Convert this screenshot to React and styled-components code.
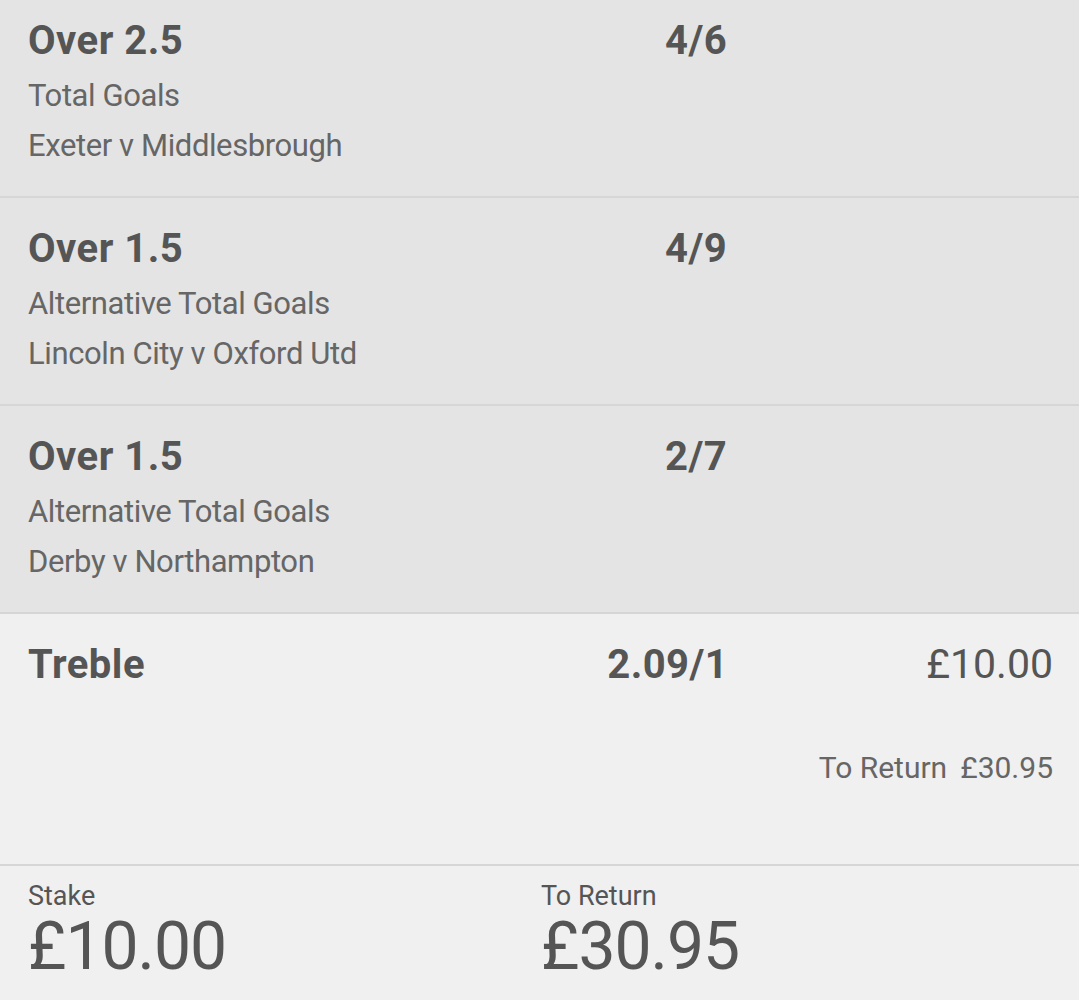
import React from "react";
import styled, { createGlobalStyle } from "styled-components";

const GlobalStyle = createGlobalStyle`
  html, body { margin: 0; padding: 0; background: #f0f0f0; }
  body { font-family: Roboto, "Noto Sans", "Liberation Sans", sans-serif; overflow: hidden; }
  * { box-sizing: border-box; }
`;

const Slip = styled.div`
  width: 1079px;
  margin-top: -10px;
  display: flex;
  flex-direction: column;
`;

const Selection = styled.div`
  display: grid;
  grid-template-columns: 1fr 160px 325px;
  padding: 29px 27px 25px 28px;
  background: #e4e4e4;
  border-bottom: 2px solid #d6d6d6;
  color: #555;
`;

const Info = styled.div`
  display: flex;
  flex-direction: column;
`;

const Title = styled.div`
  font-size: 40px;
  line-height: 44px;
  font-weight: 700;
  letter-spacing: 0.5px;
  color: #555;
`;

const Details = styled.div`
  margin-top: 8px;
  display: flex;
  flex-direction: column;
`;

const Detail = styled.div`
  font-size: 31px;
  line-height: 50px;
  letter-spacing: -0.4px;
  color: #666;
`;

const Odds = styled.div`
  font-size: 40px;
  line-height: 44px;
  font-weight: 700;
  letter-spacing: 0.4px;
  color: #555;
  text-align: right;
`;

const Multiple = styled.div`
  display: grid;
  grid-template-columns: 1fr 160px 325px;
  grid-template-rows: 44px auto;
  row-gap: 63px;
  padding: 29px 26px 78px 28px;
  background: #f0f0f0;
  border-bottom: 2px solid #d6d6d6;
`;

const StakeValue = styled.div`
  font-size: 41px;
  line-height: 44px;
  font-weight: 400;
  color: #555;
  text-align: right;
  transform: translateY(-1px);
`;

const ReturnLine = styled.div`
  grid-column: 1 / -1;
  display: flex;
  justify-content: flex-end;
  gap: 13px;
  font-size: 30px;
  line-height: 36px;
  color: #666;
`;

const Footer = styled.div`
  display: grid;
  grid-template-columns: 513px 1fr;
  padding: 15px 28px 18px 28px;
  background: #f0f0f0;
`;

const Total = styled.div`
  display: flex;
  flex-direction: column;
`;

const TotalLabel = styled.div`
  font-size: 27px;
  line-height: 30px;
  color: #555;
`;

const TotalValue = styled.div`
  font-size: 66px;
  line-height: 72px;
  letter-spacing: -1px;
  color: #555;
`;

const selections = [
  { title: "Over 2.5", market: "Total Goals", event: "Exeter v Middlesbrough", odds: "4/6" },
  { title: "Over 1.5", market: "Alternative Total Goals", event: "Lincoln City v Oxford Utd", odds: "4/9" },
  { title: "Over 1.5", market: "Alternative Total Goals", event: "Derby v Northampton", odds: "2/7" },
];

export default function App() {
  return (
    <>
      <GlobalStyle />
      <Slip>
        {selections.map((s, i) => (
          <Selection key={i}>
            <Info>
              <Title>{s.title}</Title>
              <Details>
                <Detail>{s.market}</Detail>
                <Detail>{s.event}</Detail>
              </Details>
            </Info>
            <Odds>{s.odds}</Odds>
            <div />
          </Selection>
        ))}
        <Multiple>
          <Title>Treble</Title>
          <Odds>2.09/1</Odds>
          <StakeValue>£10.00</StakeValue>
          <ReturnLine>
            <span>To Return</span>
            <span>£30.95</span>
          </ReturnLine>
        </Multiple>
        <Footer>
          <Total>
            <TotalLabel>Stake</TotalLabel>
            <TotalValue>£10.00</TotalValue>
          </Total>
          <Total>
            <TotalLabel>To Return</TotalLabel>
            <TotalValue>£30.95</TotalValue>
          </Total>
        </Footer>
      </Slip>
    </>
  );
}
